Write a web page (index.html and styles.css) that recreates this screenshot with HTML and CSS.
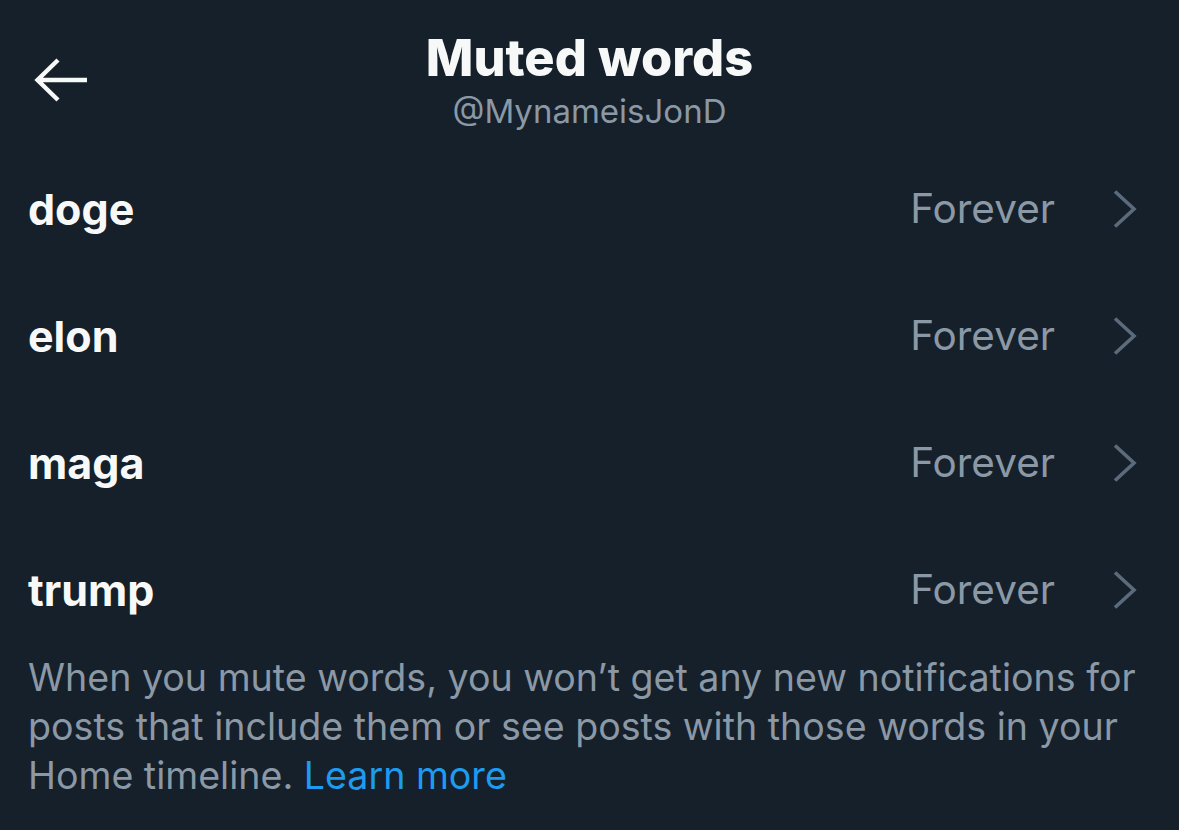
FILE: index.html
```html
<!DOCTYPE html>
<html lang="en">
<head>
    <meta charset="UTF-8">
    <meta name="viewport" content="width=device-width, initial-scale=1.0">
    <title>Muted words</title>
    <link rel="stylesheet" href="styles.css">
</head>
<body>
    <header class="top-bar">
        <a class="back" href="#" aria-label="Back">
            <svg width="56" height="48" viewBox="0 0 56 48">
                <path d="M4 22 H54 M25 2 L4.5 22 L25 42" fill="none" stroke="#f7f9f9" stroke-width="4.4" stroke-linecap="butt" stroke-linejoin="miter"/>
            </svg>
        </a>
        <div class="title-block">
            <h1>Muted words</h1>
            <p class="handle">@MynameisJonD</p>
        </div>
    </header>

    <main>
        <ul class="word-list">
            <li class="word-row">
                <span class="word">doge</span>
                <span class="duration">Forever</span>
                <svg class="chevron" width="24" height="38" viewBox="0 0 24 38"><path d="M2 1.5 L21 19 L2 36.5" fill="none" stroke="#5b6b7b" stroke-width="3.6"/></svg>
            </li>
            <li class="word-row">
                <span class="word">elon</span>
                <span class="duration">Forever</span>
                <svg class="chevron" width="24" height="38" viewBox="0 0 24 38"><path d="M2 1.5 L21 19 L2 36.5" fill="none" stroke="#5b6b7b" stroke-width="3.6"/></svg>
            </li>
            <li class="word-row">
                <span class="word">maga</span>
                <span class="duration">Forever</span>
                <svg class="chevron" width="24" height="38" viewBox="0 0 24 38"><path d="M2 1.5 L21 19 L2 36.5" fill="none" stroke="#5b6b7b" stroke-width="3.6"/></svg>
            </li>
            <li class="word-row">
                <span class="word">trump</span>
                <span class="duration">Forever</span>
                <svg class="chevron" width="24" height="38" viewBox="0 0 24 38"><path d="M2 1.5 L21 19 L2 36.5" fill="none" stroke="#5b6b7b" stroke-width="3.6"/></svg>
            </li>
        </ul>

        <p class="note">When you mute words, you won’t get any new notifications for posts that include them or see posts with those words in your Home timeline. <a href="#">Learn more</a></p>
    </main>
</body>
</html>
```

FILE: styles.css
```css
body {
    margin: 0;
    padding: 0;
    background-color: #15202b;
    color: #f7f9f9;
    font-family: Inter, "Noto Sans", sans-serif;
    min-height: 100vh;
}

.top-bar {
    position: relative;
    height: 145px;
    box-sizing: border-box;
    padding-top: 30px;
    text-align: center;
}

.back {
    position: absolute;
    left: 33px;
    top: 58px;
    display: block;
    line-height: 0;
}

.title-block h1 {
    margin: 0;
    font-size: 50.5px;
    line-height: 56px;
    font-weight: 800;
}

.handle {
    margin: 5px 0 0;
    font-size: 33px;
    line-height: 40px;
    color: #8b98a5;
}

.word-list {
    list-style-type: none;
    margin: 0;
    padding: 0;
}

.word-row {
    display: flex;
    align-items: center;
    height: 127px;
    padding: 0 42px 0 28px;
}

.word {
    flex: 1;
    font-size: 43px;
    font-weight: 700;
}

.duration {
    font-size: 40.5px;
    color: #8b98a5;
    margin-right: 58px;
}

.chevron {
    display: block;
}

.note {
    margin: 0;
    padding: 0 28px;
    font-size: 37.6px;
    line-height: 49px;
    color: #8b98a5;
}

.note a {
    color: #1d9bf0;
    text-decoration: none;
}
```
